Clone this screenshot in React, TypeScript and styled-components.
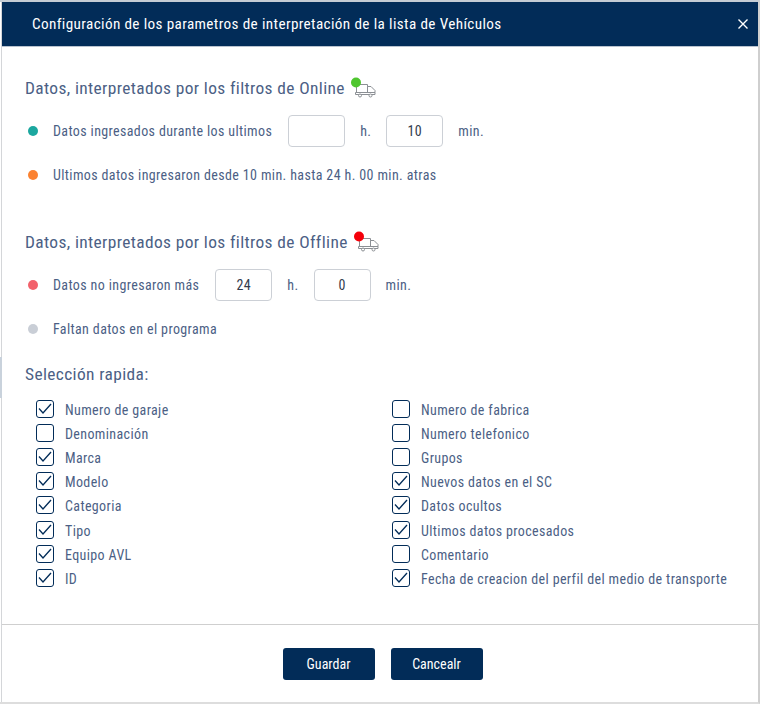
import * as React from 'react';
import styled, { createGlobalStyle } from 'styled-components';

const GlobalStyle = createGlobalStyle`
  html, body {
    margin: 0;
    padding: 0;
    background: #fff;
  }
`;

const leftColumn = [
  { label: 'Numero de garaje', checked: true },
  { label: 'Denominación', checked: false },
  { label: 'Marca', checked: true },
  { label: 'Modelo', checked: true },
  { label: 'Categoria', checked: true },
  { label: 'Tipo', checked: true },
  { label: 'Equipo AVL', checked: true },
  { label: 'ID', checked: true },
];

const rightColumn = [
  { label: 'Numero de fabrica', checked: false },
  { label: 'Numero telefonico', checked: false },
  { label: 'Grupos', checked: false },
  { label: 'Nuevos datos en el SC', checked: true },
  { label: 'Datos ocultos', checked: true },
  { label: 'Ultimos datos procesados', checked: true },
  { label: 'Comentario', checked: false },
  { label: 'Fecha de creacion del perfil del medio de transporte', checked: true },
];

const TruckIcon = ({ dot }: { dot: string }) => (
  <TruckSvg width="25" height="21" viewBox="0 0 25 21" fill="none">
    <g stroke="#8b8f94" strokeWidth="1" fill="#fff">
      <path d="M5.500 7.500h11v8h-11z" />
      <path d="M16.500 9.500h3.500l4 4v2h-7.500z" />
      <path d="M4.500 15.500h19.500v2h-19.500z" />
      <circle cx="9" cy="18.500" r="1.500" />
      <circle cx="19.500" cy="18.500" r="1.500" />
    </g>
    <circle cx="5" cy="5.500" r="5" fill={dot} />
  </TruckSvg>
);

const CheckItem = ({ label, checked }: { label: string; checked: boolean }) => (
  <CheckRow>
    <CheckBox>
      {checked && (
        <svg width="14" height="12" viewBox="0 0 14 12" fill="none">
          <path d="M1 5.500L5 10L13 1" stroke="#022c58" strokeWidth="1.300" />
        </svg>
      )}
    </CheckBox>
    {label}
  </CheckRow>
);

export default function App() {
  return (
    <Frame>
      <GlobalStyle />
      <EdgeMark />
      <Header>
        <Title>Configuración de los parametros de interpretación de la lista de Vehículos</Title>
        <CloseButton aria-label="Cerrar">
          <svg width="10" height="10" viewBox="0 0 10 10" fill="none">
            <path d="M0.500 0.500L9.500 9.500M9.500 0.500L0.500 9.500" stroke="#fff" strokeWidth="1.400" />
          </svg>
        </CloseButton>
      </Header>
      <Body>
        <Section $gap={43}>
          <SectionTitle>
            Datos, interpretados por los filtros de Online
            <TruckIcon dot="#4fc62f" />
          </SectionTitle>
          <InputRow>
            <Dot $color="#1ba79f" />
            <RowLabel>Datos ingresados durante los ultimos</RowLabel>
            <NumberBox />
            <Unit>h.</Unit>
            <NumberBox>10</NumberBox>
            <Unit>min.</Unit>
          </InputRow>
          <TextRow>
            <Dot $color="#fb8231" />
            Ultimos datos ingresaron desde 10 min. hasta 24 h. 00 min. atras
          </TextRow>
        </Section>
        <Section $gap={23}>
          <SectionTitle>
            Datos, interpretados por los filtros de Offline
            <TruckIcon dot="#f5000a" />
          </SectionTitle>
          <InputRow>
            <Dot $color="#f2616b" />
            <RowLabel>Datos no ingresaron más</RowLabel>
            <NumberBox>24</NumberBox>
            <Unit>h.</Unit>
            <NumberBox>0</NumberBox>
            <Unit>min.</Unit>
          </InputRow>
          <TextRow>
            <Dot $color="#c9ced6" />
            Faltan datos en el programa
          </TextRow>
        </Section>
        <QuickTitle>Selección rapida:</QuickTitle>
        <CheckGrid>
          <CheckColumn>
            {leftColumn.map((item) => (
              <CheckItem key={item.label} {...item} />
            ))}
          </CheckColumn>
          <CheckColumn>
            {rightColumn.map((item) => (
              <CheckItem key={item.label} {...item} />
            ))}
          </CheckColumn>
        </CheckGrid>
      </Body>
      <Footer>
        <ActionButton>Guardar</ActionButton>
        <ActionButton>Cancealr</ActionButton>
      </Footer>
    </Frame>
  );
}

const Frame = styled.div`
  position: relative;
  box-sizing: border-box;
  width: 760px;
  height: 704px;
  padding-left: 1px;
  border-top: 2px solid #c4ccd4;
  border-right: 2px solid #cfcfcf;
  border-bottom: 2px solid #dddddd;
  display: flex;
  flex-direction: column;
  font-family: Roboto, sans-serif;
  font-size: 14px;
  font-stretch: 75%;
  letter-spacing: 0.37px;
  color: #4c5f85;
  background: #fff;

  &::before {
    content: '';
    position: absolute;
    left: 1px;
    top: 0;
    bottom: 0;
    width: 1px;
    background: #d4d6d9;
  }
`;

const EdgeMark = styled.div`
  position: absolute;
  left: 0;
  top: 355px;
  width: 2px;
  height: 41px;
  background: #c9d2dc;
`;

const Header = styled.header`
  box-sizing: border-box;
  height: 45px;
  margin-left: 1px;
  flex: none;
  background: #022c58;
  border-bottom: 1px solid #b9c3cf;
  color: #fff;
  display: flex;
  align-items: center;
  justify-content: space-between;
  padding: 0 9px 0 30px;
`;

const Title = styled.h1`
  margin: 0;
  font-size: 15.200px;
  font-weight: 400;
`;

const CloseButton = styled.button`
  width: 12px;
  height: 12px;
  border: 0;
  padding: 0;
  background: none;
  display: flex;
  align-items: center;
  justify-content: center;
`;

const Body = styled.main`
  flex: 1;
  padding: 27px 0 0 24px;
`;

const Section = styled.section<{ $gap: number }>`
  margin-bottom: ${(p) => p.$gap}px;
`;

const SectionTitle = styled.h2`
  margin: 0;
  height: 28px;
  display: flex;
  align-items: center;
  gap: 6px;
  font-size: 17.400px;
  font-weight: 400;
`;

const TruckSvg = styled.svg`
  margin-top: -1px;
`;

const InputRow = styled.div`
  height: 34px;
  margin-top: 12px;
  display: flex;
  align-items: center;
`;

const TextRow = styled.div`
  height: 20px;
  margin-top: 17px;
  display: flex;
  align-items: center;
`;

const Dot = styled.span<{ $color: string }>`
  width: 10px;
  height: 10px;
  margin: 0 15px 0 3px;
  border-radius: 50%;
  background: ${(p) => p.$color};
  flex: none;
`;

const RowLabel = styled.span`
  margin-right: 16px;
`;

const NumberBox = styled.div`
  box-sizing: border-box;
  width: 57px;
  height: 32px;
  border: 1px solid #ccd0d6;
  border-radius: 4px;
  color: #333c4d;
  display: flex;
  align-items: center;
  justify-content: center;
`;

const Unit = styled.span`
  margin: 0 15px;
`;

const QuickTitle = styled.h2`
  margin: 0;
  font-size: 17.400px;
  font-weight: 400;
  height: 24px;
  display: flex;
  align-items: center;
`;

const CheckGrid = styled.div`
  display: grid;
  grid-template-columns: 356px 1fr;
  margin: 12px 0 0 11px;
`;

const CheckColumn = styled.div`
  display: flex;
  flex-direction: column;
`;

const CheckRow = styled.label`
  height: 24.100px;
  display: flex;
  align-items: center;
  gap: 11px;
`;

const CheckBox = styled.span`
  box-sizing: border-box;
  width: 18px;
  height: 18px;
  margin-top: -2px;
  border: 1.500px solid #022c58;
  border-radius: 3px;
  display: flex;
  align-items: center;
  justify-content: center;
`;

const Footer = styled.footer`
  box-sizing: border-box;
  height: 78px;
  flex: none;
  border-top: 1px solid #cfcfcf;
  padding-left: 6px;
  display: flex;
  justify-content: center;
  align-items: center;
  gap: 16px;
`;

const ActionButton = styled.button`
  width: 92px;
  height: 32px;
  border: 0;
  border-radius: 3px;
  background: #022c58;
  color: #fff;
  font-family: Roboto, sans-serif;
  font-size: 14px;
  font-stretch: 75%;
`;
